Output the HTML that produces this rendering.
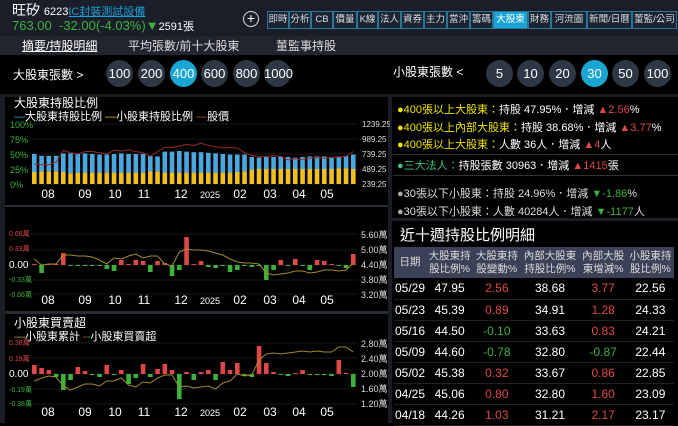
<!DOCTYPE html>
<html><head><meta charset="utf-8"><style>
*{margin:0;padding:0;box-sizing:border-box}
body{width:678px;height:423px;background:#000;overflow:hidden;position:relative;font-family:"Liberation Sans","Noto Sans CJK TC",sans-serif;color:#fff}
.a{position:absolute;white-space:nowrap}
.nav{position:absolute;top:11px;height:18px;border:1px solid #2a7595;background:#1a2432;color:#ddd;font-size:9.5px;line-height:16px;text-align:center;white-space:nowrap;overflow:hidden}
.c{position:absolute;top:60px;width:27px;height:27px;border-radius:50%;background:#2e3844;color:#fff;font-size:13px;line-height:27px;text-align:center}
.c.on{background:#19a6d2}
.inf{position:absolute;left:397px;font-size:11px;white-space:nowrap}
.y{color:#f2e400}.r{color:#e04848}.g{color:#3bb23b}.gr{color:#3fbf7f}
td{font-size:12px;text-align:center;height:21px;border-bottom:1px solid #222}
th{font-size:10.5px;font-weight:normal;color:#ddd;line-height:13px}
</style></head><body>
<div class="a" style="left:0;top:0;width:678px;height:36px;background:#1b1d29"></div>
<div class="a" style="left:12px;top:1px;font-size:14px;line-height:18px">旺矽 <span style="font-size:11px">6223</span><span style="font-size:11px;color:#1c9fd6;text-decoration:underline">IC封裝測試設備</span></div>
<div class="a" style="left:12px;top:18px;font-size:13px;line-height:15px;color:#3bb23b">763.00 &nbsp;-32.00(-4.03%)▼<span style="color:#fff;font-size:11px">2591張</span></div>
<div class="a" style="left:243px;top:11px;width:16px;height:16px;border:1.5px solid #ddd;border-radius:50%;text-align:center;line-height:13px;font-size:14px">+</div>
<div class="nav" style="left:267px;width:22px">即時</div>
<div class="nav" style="left:289px;width:22px">分析</div>
<div class="nav" style="left:311px;width:22px">CB</div>
<div class="nav" style="left:333px;width:24px">價量</div>
<div class="nav" style="left:357px;width:21px">K線</div>
<div class="nav" style="left:378px;width:23px">法人</div>
<div class="nav" style="left:401px;width:23px">資券</div>
<div class="nav" style="left:424px;width:23px">主力</div>
<div class="nav" style="left:447px;width:23px">當沖</div>
<div class="nav" style="left:470px;width:23px">籌碼</div>
<div class="nav" style="left:493px;width:35px;background:#19a6d2;color:#fff">大股東</div>
<div class="nav" style="left:528px;width:23px">財務</div>
<div class="nav" style="left:551px;width:36px">河流圖</div>
<div class="nav" style="left:587px;width:45px">新聞/日曆</div>
<div class="nav" style="left:632px;width:45px">董監/公司</div>
<div class="a" style="left:0;top:36px;width:678px;height:19px;background:#22252f"></div>
<div class="a" style="left:22px;top:37px;font-size:12px;text-decoration:underline">摘要/持股明細</div>
<div class="a" style="left:128px;top:37px;font-size:12px;color:#ddd">平均張數/前十大股東</div>
<div class="a" style="left:276px;top:37px;font-size:12px;color:#ddd">董監事持股</div>
<div class="a" style="left:13px;top:66px;font-size:12px">大股東張數 &gt;</div>
<div class="c" style="left:106px">100</div><div class="c" style="left:138px">200</div><div class="c on" style="left:170px">400</div><div class="c" style="left:201px">600</div><div class="c" style="left:233px">800</div><div class="c" style="left:264px">1000</div>
<div class="a" style="left:393px;top:63px;font-size:12px">小股東張數 &lt;</div>
<div class="c" style="left:486px">5</div><div class="c" style="left:517px">10</div><div class="c" style="left:549px">20</div><div class="c on" style="left:581px">30</div><div class="c" style="left:612px">50</div><div class="c" style="left:644px">100</div>
<div class="a" style="left:0;top:94px;width:678px;height:3px;background:#1b1d25"></div>
<div class="a" style="left:0;top:97px;width:5px;height:326px;background:#1b1d25"></div>
<div class="a" style="left:388px;top:97px;width:4px;height:326px;background:#1b1d25"></div>
<div class="a" style="left:5px;top:205px;width:383px;height:2px;background:#2a2d35"></div>
<div class="a" style="left:5px;top:311px;width:383px;height:3px;background:#2a2d35"></div>
<div class="a" style="left:392px;top:218px;width:286px;height:3px;background:#1b1d25"></div>
<svg id="s" class="a" style="left:0;top:0" width="390" height="423"></svg>
<div class="a" style="left:14px;top:96px;font-size:12px;line-height:14px">大股東持股比例</div>
<div class="a" style="left:14px;top:111px;font-size:11px;line-height:13px"><span style="color:#3fa9e8">—</span>大股東持股比例 <span style="color:#e8c02a">—</span>小股東持股比例 <span style="color:#c0502a">—</span>股價</div>
<div class="a" style="left:14px;top:316px;font-size:12px;line-height:14px">小股東買賣超</div>
<div class="a" style="left:14px;top:331px;font-size:11px;line-height:13px"><span style="color:#c9a23a">—</span>小股東累計 <span style="color:#e04848">-</span><span style="color:#3bb23b">-</span>小股東買賣超</div>
<div class="inf" style="top:101px"><span class="y">●400張以上大股東：</span>持股 47.95%．增減 <span class="r">▲2.56</span>%</div>
<div class="inf" style="top:119px"><span class="y">●400張以上內部大股東：</span>持股 38.68%．增減 <span class="r">▲3.77</span>%</div>
<div class="inf" style="top:136px"><span class="y">●400張以上大股東：</span>人數 36人．增減 <span class="r">▲4</span>人</div>
<div class="a" style="left:393px;top:154px;width:285px;height:1px;background:#333"></div>
<div class="inf" style="top:157px"><span class="gr">●三大法人：</span>持股張數 30963．增減 <span class="r">▲1415</span>張</div>
<div class="a" style="left:393px;top:175px;width:285px;height:1px;background:#333"></div>
<div class="inf" style="top:185px;color:#ddd"><span style="color:#aaa">●</span>30張以下小股東：持股 24.96%．增減 <span class="g">▼-1.86</span>%</div>
<div class="inf" style="top:203px;color:#ddd"><span style="color:#aaa">●</span>30張以下小股東：人數 40284人．增減 <span class="g">▼-1177</span>人</div>
<div class="a" style="left:400px;top:224px;font-size:15px">近十週持股比例明細</div>
<table class="a" style="left:394px;top:247px;width:280px;border-collapse:collapse">
<tr style="background:#3b4157;height:31px"><th style="width:32px">日期</th><th>大股東持<br>股比例%</th><th>大股東持<br>股變動%</th><th>內部大股東<br>持股比例%</th><th>內部大股<br>東增減%</th><th>小股東持<br>股比例%</th></tr>
<tr><td>05/29</td><td>47.95</td><td class="r">2.56</td><td>38.68</td><td class="r">3.77</td><td>22.56</td></tr>
<tr><td>05/23</td><td>45.39</td><td class="r">0.89</td><td>34.91</td><td class="r">1.28</td><td>24.33</td></tr>
<tr><td>05/16</td><td>44.50</td><td class="g">-0.10</td><td>33.63</td><td class="r">0.83</td><td>24.21</td></tr>
<tr><td>05/09</td><td>44.60</td><td class="g">-0.78</td><td>32.80</td><td class="g">-0.87</td><td>22.44</td></tr>
<tr><td>05/02</td><td>45.38</td><td class="r">0.32</td><td>33.67</td><td class="r">0.86</td><td>22.85</td></tr>
<tr><td>04/25</td><td>45.06</td><td class="r">0.80</td><td>32.80</td><td class="r">1.60</td><td>23.09</td></tr>
<tr><td>04/18</td><td>44.26</td><td class="r">1.03</td><td>31.21</td><td class="r">2.17</td><td>23.17</td></tr>
</table>
<script>
var s='',X=function(i){return 32+i*7.25};
function t(x,y,txt,c,sz,a){s+='<text x="'+x+'" y="'+y+'" fill="'+c+'" font-size="'+sz+'" text-anchor="'+(a||'start')+'" font-family="Liberation Sans, sans-serif">'+txt+'</text>'}
function ln(y){s+='<line x1="30" x2="358" y1="'+y+'" y2="'+y+'" stroke="#333" stroke-width="0.6"/>'}
var blue=[50,47,47,47,51,51,50,51,50,49,49,50,51,50,50,50,47,46,54,54,55,54,53,53,52,51,50,49,49,49,45,44,45,45,46,45,44,45,46,46,46,45,46,47,49];
var yel=[20,21,21,21,20,18,19,19,19,19,19,19,19,19,19,19,21,21,19,19,19,19,19,19,19,19,19,19,20,21,24,25,25,25,25,25,25,25,25,25,25,25,26,26,25];
var pr=[570,560,560,600,800,760,740,780,780,760,740,800,790,810,780,760,700,780,850,850,870,900,880,920,880,860,840,850,840,760,720,690,700,710,700,640,660,650,670,680,670,680,690,700,780];
[124,139,154,169,184].forEach(ln);
var i,p='';
for(i=0;i<45;i++){var yb=184-blue[i]*0.6,yy=184-yel[i]*0.6;
s+='<rect x="'+X(i)+'" y="'+yb+'" width="4.6" height="'+(yy-yb)+'" fill="#4aa8e0"/><rect x="'+X(i)+'" y="'+yy+'" width="4.6" height="'+(184-yy)+'" fill="#f0c020"/>';
p+=(X(i)+2.3)+','+(184-(pr[i]-239.25)*0.06)+' ';}
s+='<polyline points="'+p+'" fill="none" stroke="#9a2a2a" stroke-width="1"/>';
[['100%',128],['75%',143],['50%',158],['25%',173],['0%',188]].forEach(function(a){t(10,a[1],a[0],'#3bb23b',9)});
['1239.25','989.25','739.25','489.25','239.25'].forEach(function(v,k){t(362,127+k*15,v,'#ddd',8)});
var mo=[['08',48],['09',85],['10',115],['11',144],['12',181],['2025',210],['02',240],['03',270],['04',299],['05',327]];
function months(y){mo.forEach(function(m){t(m[1],y,m[0],'#fff',m[0]=='2025'?9:12,'middle')})}
months(198);
[234,250,265,280,294].forEach(ln);
var c2=[1,-8,1,1,12,0,-1,0,0,-1,-4,-6,5,1,5,4,-7,4,2,-11,-5,28,1,4,-2,-3,-1,-7,-5,-1,-2,0,-15,-5,5,-1,6,0,-5,5,4,1,0,-3,11];
var l2=[259,265,264,264,255,255,256,256,257,260,264,258,259,256,254,258,256,256,264,266,252,249,250,250,251,253,255,259,262,263,263,264,273,275,274,273,271,271,273,272,270,270,271,270,263];
p='';
for(i=0;i<45;i++){var h=c2[i];s+='<rect x="'+X(i)+'" y="'+(h>0?265-h:265)+'" width="4.6" height="'+Math.max(Math.abs(h),1)+'" fill="'+(h>0?'#e04848':'#3bb23b')+'"/>';p+=(X(i)+2.3)+','+l2[i]+' ';}
s+='<polyline points="'+p+'" fill="none" stroke="#a08a2a" stroke-width="1"/>';
[['0.66萬',236,'#e04848'],['0.33萬',251,'#e04848'],['0.00',268,'#fff'],['-0.33萬',282,'#3bb23b'],['-0.66萬',297,'#3bb23b']].forEach(function(a){t(9,a[1],a[0],a[2],a[0]=='0.00'?10:7)});
['5.60萬','5.00萬','4.40萬','3.80萬','3.20萬'].forEach(function(v,k){t(361,238+k*15,v,'#ddd',9)});
months(304);
[343,358,374,389,404].forEach(ln);
var c3=[9,6,4,-3,-16,-6,7,3,0,-3,9,0,4,-10,-4,10,-3,5,10,4,-25,2,-6,2,4,-6,12,4,11,-2,-3,28,11,2,0,-2,1,4,-1,-1,-1,-2,14,1,-13];
var l3=[381,378,376,377,386,390,387,384,384,386,381,381,378,385,387,382,383,378,375,375,387,386,388,387,386,389,383,381,374,376,375,360,354,353,354,353,352,351,352,351,352,352,347,347,352];
p='';
for(i=0;i<45;i++){var h=c3[i];s+='<rect x="'+X(i)+'" y="'+(h>0?374-h:374)+'" width="4.6" height="'+Math.max(Math.abs(h),1)+'" fill="'+(h>0?'#e04848':'#3bb23b')+'"/>';p+=(X(i)+2.3)+','+l3[i]+' ';}
s+='<polyline points="'+p+'" fill="none" stroke="#a08a2a" stroke-width="1"/>';
[['0.38萬',345,'#e04848'],['0.19萬',361,'#e04848'],['0.00',377,'#fff'],['-0.19萬',392,'#3bb23b'],['-0.38萬',406,'#3bb23b']].forEach(function(a){t(9,a[1],a[0],a[2],a[0]=='0.00'?10:7)});
['2.80萬','2.40萬','2.00萬','1.60萬','1.20萬'].forEach(function(v,k){t(361,347+k*15,v,'#ddd',9)});
months(416);
document.getElementById('s').innerHTML=s;
</script>
</body></html>
